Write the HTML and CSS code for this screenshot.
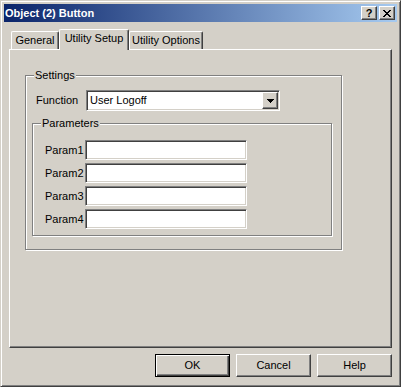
FILE: index.html
```html
<!DOCTYPE html>
<html>
<head>
<meta charset="utf-8">
<link rel="stylesheet" href="styles.css">
</head>
<body>
<div class="window">
  <div class="titlebar">
    <span class="title">Object (2) Button</span>
    <div class="caption-btns">
      <span class="cbtn help-btn">?</span>
      <span class="cbtn close-btn"><svg width="8" height="7" viewBox="0 0 8 7" shape-rendering="crispEdges"><path fill="#000" d="M0 0h2v1H0z M6 0h2v1H6z M1 1h2v1H1z M5 1h2v1H5z M2 2h4v1H2z M3 3h2v1H3z M2 4h4v1H2z M1 5h2v1H1z M5 5h2v1H5z M0 6h2v1H0z M6 6h2v1H6z"/></svg></span>
    </div>
  </div>
  <div class="client">
    <div class="tabs">
      <div class="tab tab-general">General</div>
      <div class="tab tab-active">Utility Setup</div>
      <div class="tab tab-options">Utility Options</div>
    </div>
    <div class="panel">
      <div class="group settings">
        <div class="group-title">Settings</div>
        <div class="func-row">
          <span class="func-lbl">Function</span>
          <div class="combo">
            <span class="combo-text">User Logoff</span>
            <span class="drop"><svg width="7" height="4" viewBox="0 0 7 4" shape-rendering="crispEdges"><path fill="#000" d="M0 0h7v1H0z M1 1h5v1H1z M2 2h3v1H2z M3 3h1v1H3z"/></svg></span>
          </div>
        </div>
        <div class="group params">
          <div class="group-title">Parameters</div>
          <div class="param-list">
            <div class="param-row"><span class="param-lbl">Param1</span><div class="field"></div></div>
            <div class="param-row"><span class="param-lbl">Param2</span><div class="field"></div></div>
            <div class="param-row"><span class="param-lbl">Param3</span><div class="field"></div></div>
            <div class="param-row"><span class="param-lbl">Param4</span><div class="field"></div></div>
          </div>
        </div>
      </div>
    </div>
    <div class="buttons">
      <div class="btn btn-default">OK</div>
      <div class="btn">Cancel</div>
      <div class="btn">Help</div>
    </div>
  </div>
</div>
</body>
</html>
```
FILE: styles.css
```css
* { box-sizing: border-box; }
html, body { margin: 0; padding: 0; }
body {
  font-family: "Liberation Sans", Arial, sans-serif;
  font-size: 11px;
  line-height: 13px;
  color: #000;
  background: #d4d0c8;
}
.window {
  width: 401px;
  height: 387px;
  background: #d4d0c8;
  border: 1px solid;
  border-color: #d4d0c8 #404040 #404040 #d4d0c8;
  box-shadow: inset 1px 1px 0 #fff, inset -1px -1px 0 #808080;
  padding: 3px;
  display: flex;
  flex-direction: column;
}
.titlebar {
  height: 18px;
  flex: none;
  background: linear-gradient(to right, #0a246a, #a6caf0);
  display: flex;
  align-items: center;
  padding: 0 2px 0 1px;
}
.title {
  flex: 1;
  color: #fff;
  font-weight: bold;
  white-space: nowrap;
}
.caption-btns {
  display: flex;
  gap: 2px;
}
.cbtn {
  width: 16px;
  height: 14px;
  background: #d4d0c8;
  border: 1px solid;
  border-color: #fff #404040 #404040 #fff;
  box-shadow: inset -1px -1px 0 #808080;
  display: flex;
  align-items: center;
  justify-content: center;
}
.help-btn {
  font-weight: bold;
  font-size: 11px;
  line-height: 11px;
  padding-top: 1px;
}
.close-btn svg { display: block; margin-top: 1px; }
.client {
  flex: 1;
  padding: 7px 5px 0 5px;
  display: flex;
  flex-direction: column;
}
.tabs {
  height: 20px;
  display: flex;
  align-items: flex-end;
  padding-left: 2px;
  position: relative;
  z-index: 1;
}
.tab {
  height: 18px;
  background: #d4d0c8;
  border-top: 1px solid #fff;
  border-left: 1px solid #fff;
  border-right: 1px solid #404040;
  border-radius: 2px 2px 0 0;
  box-shadow: inset -1px 0 0 #808080;
  display: flex;
  justify-content: center;
  padding-top: 2px;
  white-space: nowrap;
}
.tab-general { width: 48px; }
.tab-options { width: 74px; }
.tab-active {
  width: 70px;
  height: 21px;
  margin-bottom: -1px;
}
.panel {
  height: 299px;
  flex: none;
  border: 1px solid;
  border-color: #fff #404040 #404040 #fff;
  box-shadow: inset -1px -1px 0 #808080;
  padding: 25px 0 0 15px;
}
.group {
  border: 1px solid #808080;
  box-shadow: 1px 1px 0 #fff, inset 1px 1px 0 #fff;
  display: flex;
  flex-direction: column;
  align-items: flex-start;
}
.settings { width: 317px; height: 175px; }
.group-title {
  margin-top: -7px;
  margin-left: 8px;
  padding: 0 1px;
  background: #d4d0c8;
  line-height: 13px;
}
.func-row {
  margin-top: 8px;
  margin-left: 10px;
  display: flex;
  align-items: center;
}
.func-lbl { width: 50px; }
.combo {
  width: 194px;
  height: 21px;
  background: #fff;
  border: 1px solid;
  border-color: #808080 #fff #fff #808080;
  box-shadow: inset 1px 1px 0 #404040, inset -1px -1px 0 #d4d0c8;
  padding: 1px;
  display: flex;
  align-items: stretch;
}
.combo-text {
  flex: 1;
  display: flex;
  align-items: center;
  padding-left: 2px;
}
.drop {
  width: 16px;
  background: #d4d0c8;
  border: 1px solid;
  border-color: #fff #404040 #404040 #fff;
  box-shadow: inset -1px -1px 0 #808080;
  display: flex;
  align-items: center;
  justify-content: center;
}
.drop svg { display: block; }
.params {
  width: 300px;
  height: 113px;
  margin-top: 12px;
  margin-left: 6px;
}
.param-list {
  margin-top: 10px;
  margin-left: 12px;
  display: flex;
  flex-direction: column;
  gap: 3px;
}
.param-row {
  display: flex;
  align-items: center;
}
.param-lbl { width: 40px; }
.field {
  width: 162px;
  height: 20px;
  background: #fff;
  border: 1px solid;
  border-color: #808080 #fff #fff #808080;
  box-shadow: inset 1px 1px 0 #404040, inset -1px -1px 0 #d4d0c8;
}
.buttons {
  margin-top: 6px;
  display: flex;
  justify-content: flex-end;
  gap: 6px;
}
.btn {
  width: 75px;
  height: 23px;
  border: 1px solid;
  border-color: #fff #404040 #404040 #fff;
  box-shadow: inset -1px -1px 0 #808080;
  display: flex;
  align-items: center;
  justify-content: center;
}
.btn-default {
  border-color: #000;
  box-shadow: inset 1px 1px 0 #fff, inset -1px -1px 0 #404040, inset -2px -2px 0 #808080;
}
```
